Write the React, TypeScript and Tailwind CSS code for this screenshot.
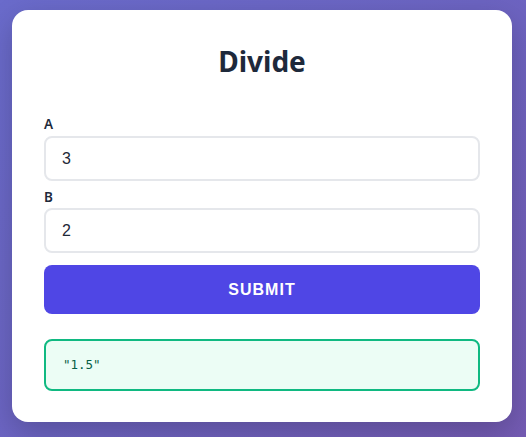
import React from "react";

export default function App() {
  return (
    <div className="min-h-[437px] w-[526px] bg-[linear-gradient(135deg,#6a6bcb_0%,#6c64c2_50%,#745bb3_100%)] pt-[10px] pb-[15px] px-[12px]">
      <div className="w-[500px] h-[412px] rounded-[16px] bg-white px-[32px] pt-[32px] shadow-[0_10px_30px_rgba(0,0,0,0.2)]">
        <h1 className="text-center text-[28px] font-bold leading-[38px] text-[#1e293b] [font-family:'Noto_Sans',sans-serif]">
          Divide
        </h1>
        <div className="mt-[36px] flex flex-col">
          <label className="text-[13.5px] leading-[16px] font-semibold text-[#1e293b] [font-family:'Noto_Sans',sans-serif]">
            A
          </label>
          <input
            defaultValue="3"
            className="mt-[4px] h-[45px] w-full rounded-[8px] border-2 border-[#e5e7eb] px-[16px] text-[16px] text-[#1f2937] outline-none [font-family:'Liberation_Sans',Arial,sans-serif]"
          />
          <label className="mt-[8px] text-[13.5px] leading-[16px] font-semibold text-[#1e293b] [font-family:'Noto_Sans',sans-serif]">
            B
          </label>
          <input
            defaultValue="2"
            className="mt-[3px] h-[45px] w-full rounded-[8px] border-2 border-[#e5e7eb] px-[16px] text-[16px] text-[#1f2937] outline-none [font-family:'Liberation_Sans',Arial,sans-serif]"
          />
          <button className="mt-[12px] h-[49px] w-full rounded-[8px] bg-[#4f46e5] text-[16px] font-bold tracking-[1px] text-white [font-family:'Liberation_Sans',Arial,sans-serif]">
            SUBMIT
          </button>
          <div className="mt-[25px] flex h-[52px] items-center rounded-[8px] border-2 border-[#10b981] bg-[#ecfdf5] px-[17px] text-[12.5px] text-[#065f46] [font-family:'DejaVu_Sans_Mono',monospace]">
            "1.5"
          </div>
        </div>
      </div>
    </div>
  );
}
